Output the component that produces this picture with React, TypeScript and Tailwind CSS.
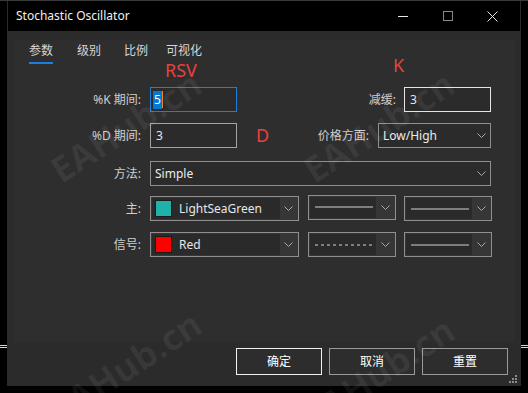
import React from "react";

const font = "font-['Noto_Sans','Noto_Sans_CJK_SC',sans-serif]";

function Chevron() {
  return (
    <svg width="9" height="5" viewBox="0 0 9 5" className="shrink-0">
      <polyline points="0.5,0.5 4.5,4.5 8.5,0.5" fill="none" stroke="#a9a9a9" strokeWidth="1" />
    </svg>
  );
}

function Label({ children }: { children: React.ReactNode }) {
  return <div className="w-[128px] shrink-0 pr-[1px] text-right text-[12px] text-[#cfcfcf]">{children}</div>;
}

function TextBox({ value, border, focused }: { value: string; border: string; focused?: boolean }) {
  return (
    <div className={`flex h-[25px] w-[87px] shrink-0 items-center border bg-[#2b2b2b] pl-[2px] text-[12px] text-[#e6e6e6] ${border}`}>
      {focused ? (
        <>
          <span className="bg-[#0078d7] px-[1px] leading-[18px] text-white">{value}</span>
          <span className="h-[17px] w-[1px] bg-[#e08a2a]" />
        </>
      ) : (
        <span className="pl-[3px]">{value}</span>
      )}
    </div>
  );
}

function Select({ value, width }: { value: string; width: string }) {
  return (
    <div className={`flex h-[25px] shrink-0 items-center justify-between border border-[#8f8f8f] bg-[#2b2b2b] pl-[4px] pr-[4px] text-[12px] text-[#ebebeb] ${width}`}>
      <span>{value}</span>
      <Chevron />
    </div>
  );
}

function ColorSelect({ color, name }: { color: string; name: string }) {
  return (
    <div className="flex h-[25px] w-[149px] shrink-0 border border-[#8f8f8f] bg-[#363636] p-[1px]">
      <div className="flex flex-1 items-center bg-[#2a2a2a] pl-[3px] text-[12px] text-[#e6e6e6]">
        <span className={`h-[17px] w-[17px] border border-[#1c1c1c] ${color}`} />
        <span className="ml-[7px]">{name}</span>
      </div>
      <div className="flex w-[17px] items-center justify-center">
        <Chevron />
      </div>
    </div>
  );
}

function LineSelect({ dashed }: { dashed?: boolean }) {
  return (
    <div className="flex h-[25px] w-[88px] shrink-0 border border-[#8f8f8f] bg-[#363636] p-[1px]">
      <div className="flex flex-1 items-center bg-[#2a2a2a] pl-[5px]">
        <svg width="58" height="2" viewBox="0 0 58 2">
          <line x1="0" y1="1" x2="58" y2="1" stroke="#d2d2d2" strokeWidth="1" strokeDasharray={dashed ? "3 3" : undefined} />
        </svg>
      </div>
      <div className="flex w-[18px] items-center justify-center">
        <Chevron />
      </div>
    </div>
  );
}

function Button({ text, primary }: { text: string; primary?: boolean }) {
  return (
    <div
      className={`flex h-[27px] w-[86px] items-center justify-center border bg-[#2d2d2d] text-[12px] text-white ${
        primary ? "border-[#f2f2f2]" : "border-[#9a9a9a]"
      }`}
    >
      {text}
    </div>
  );
}

const marks = [
  "left-[126px] top-[126px]",
  "left-[379px] top-[126px]",
  "left-[126px] top-[366px]",
  "left-[379px] top-[372px]",
];

export default function App() {
  return (
    <div className={`relative h-[393px] w-[528px] overflow-hidden border-t border-[#3a3a3a] bg-black ${font}`}>
      {/* chart lines behind the window */}
      <div className="absolute left-0 top-[344px] h-[3px] w-[7px] border-y border-[#d8d8d8]" />
      <div className="absolute right-0 top-[344px] h-[3px] w-[7px] border-y border-[#d8d8d8]" />

      {/* window */}
      <div className="ml-[7px] flex h-[385px] w-[514px] flex-col border-x border-[#2a2a2a]">
        {/* title bar */}
        <div className="flex h-[30px] items-center bg-black">
          <div className="pl-[8px] text-[12px] text-[#f0f0f0]">Stochastic Oscillator</div>
          <div className="ml-auto mr-[5px] flex">
            <div className="flex h-[30px] w-[45px] items-center justify-center">
              <div className="h-[1px] w-[10px] bg-[#e8e8e8]" />
            </div>
            <div className="flex h-[30px] w-[45px] items-center justify-center">
              <div className="h-[10px] w-[10px] border border-[#8a8a8a]" />
            </div>
            <div className="flex h-[30px] w-[45px] items-center justify-center">
              <svg width="11" height="11" viewBox="0 0 11 11">
                <path d="M0.5 0.5 L10.5 10.5 M10.5 0.5 L0.5 10.5" stroke="#e8e8e8" strokeWidth="1" />
              </svg>
            </div>
          </div>
        </div>

        {/* body */}
        <div className="relative flex flex-1 flex-col bg-[#2b2b2b] pl-[6px] pr-[5px] pt-[9px]">
          <div className="flex h-[302px] flex-col bg-[#2e2e2e]">
            {/* tabs */}
            <div className="flex pl-[15px] pt-[3px] text-[12px] text-[#d6d6d6]">
              <div className="flex flex-col">
                <span className="leading-[16px]">参数</span>
                <span className="mt-[3px] h-[2px] w-[24px] bg-[#1a7fe0]" />
              </div>
              <span className="ml-[24px] leading-[16px]">级别</span>
              <span className="ml-[23px] leading-[16px]">比例</span>
              <span className="ml-[18px] leading-[16px]">可视化</span>
            </div>

            {/* rows */}
            <div className="mt-[23px] flex flex-col pr-[24px]">
              <div className="flex h-[25px] items-center">
                <Label>%K 期间:</Label>
                <div className="ml-[8px]">
                  <TextBox value="5" border="border-[#1e7fd6]" focused />
                </div>
                <div className="flex-1 pr-[8px] text-right text-[12px] text-[#cfcfcf]">减缓:</div>
                <TextBox value="3" border="border-[#e4e4e4]" />
              </div>

              <div className="mt-[11px] flex h-[25px] items-center">
                <Label>%D 期间:</Label>
                <div className="ml-[8px]">
                  <TextBox value="3" border="border-[#a3a3a3]" />
                </div>
                <div className="flex-1 pr-[9px] text-right text-[12px] text-[#cfcfcf]">价格方面:</div>
                <Select value="Low/High" width="w-[113px]" />
              </div>

              <div className="mt-[13px] flex h-[25px] items-center">
                <Label>方法:</Label>
                <div className="ml-[8px] flex-1">
                  <Select value="Simple" width="w-full" />
                </div>
              </div>

              <div className="mt-[10px] flex h-[25px] items-center">
                <Label>主:</Label>
                <div className="ml-[8px] flex items-center">
                  <ColorSelect color="bg-[#20b2aa]" name="LightSeaGreen" />
                  <div className="ml-[9px] mb-[3px]">
                    <LineSelect />
                  </div>
                  <div className="ml-[8px]">
                    <LineSelect />
                  </div>
                </div>
              </div>

              <div className="mt-[11px] flex h-[25px] items-center">
                <Label>信号:</Label>
                <div className="ml-[8px] flex items-center">
                  <ColorSelect color="bg-[#ff0000]" name="Red" />
                  <div className="ml-[9px]">
                    <LineSelect dashed />
                  </div>
                  <div className="ml-[8px]">
                    <LineSelect />
                  </div>
                </div>
              </div>
            </div>
          </div>

          {/* buttons */}
          <div className="mt-[6px] flex justify-end gap-[7px] pr-[7px]">
            <Button text="确定" primary />
            <Button text="取消" />
            <Button text="重置" />
          </div>

          {/* resize grip */}
          <svg width="9" height="9" viewBox="0 0 9 9" className="absolute bottom-[2px] right-[2px]">
            <rect x="6" y="0" width="2" height="2" fill="#8a8a8a" />
            <rect x="3" y="3" width="2" height="2" fill="#8a8a8a" />
            <rect x="6" y="3" width="2" height="2" fill="#8a8a8a" />
            <rect x="0" y="6" width="2" height="2" fill="#8a8a8a" />
            <rect x="3" y="6" width="2" height="2" fill="#8a8a8a" />
            <rect x="6" y="6" width="2" height="2" fill="#8a8a8a" />
          </svg>
        </div>
      </div>

      {/* red annotations */}
      <div className="absolute left-[165px] top-[60px] text-[18px] leading-none text-[#e8413c]">RSV</div>
      <div className="absolute left-[393px] top-[55px] text-[18px] leading-none text-[#e8413c]">K</div>
      <div className="absolute left-[256px] top-[125px] text-[18px] leading-none text-[#e8413c]">D</div>

      {/* watermark */}
      {marks.map((pos, i) => (
        <div
          key={i}
          className={`pointer-events-none absolute -translate-x-1/2 -translate-y-1/2 -rotate-[33deg] whitespace-nowrap text-[36px] font-bold leading-none text-white/[0.06] ${pos}`}
        >
          EAHub.cn
        </div>
      ))}
    </div>
  );
}
